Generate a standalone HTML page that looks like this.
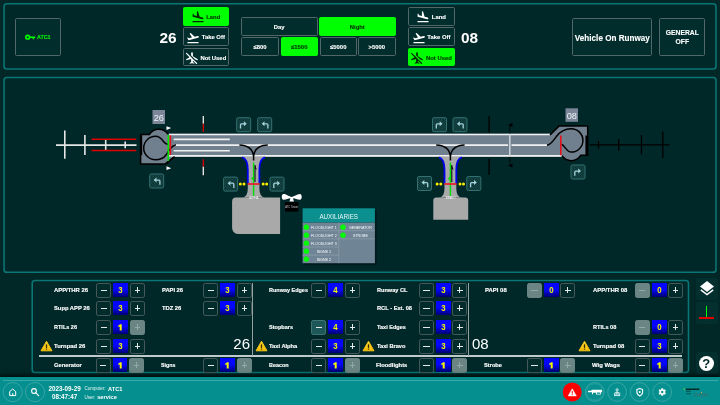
<!DOCTYPE html><html><head><meta charset='utf-8'><title>ATC</title><style>
*{box-sizing:border-box;margin:0;padding:0}
html,body{width:720px;height:405px;overflow:hidden;background:#012727;font-family:"Liberation Sans",sans-serif;color:#fff}
.abs{position:absolute}
.panel{position:absolute;border:1.7px solid #0a7676;border-radius:3.5px;background:#012829}
.btn{position:absolute;border:1px solid #526868;border-radius:1.6px;-webkit-text-stroke:0.12px currentColor;background:#022d2d;color:#fff;font-weight:bold;display:flex;align-items:center;justify-content:center;text-align:center}
.btn.on{background:#00ff00;border-color:#00ff00;color:#003000}
.lbl{position:absolute;font-weight:bold;font-size:6.1px;line-height:8px;white-space:nowrap;color:#fff;-webkit-text-stroke:0.15px #fff}
.sq{position:absolute;width:15.2px;height:15.2px;border:1px solid #45595a;border-radius:2.2px;background:#022b2b}
.sq.dis{background:#6a8583;border-color:#6a8583}
.sq.hov{background:#1d5757;border-color:#3f7777}
.val{position:absolute;width:14.8px;height:13.9px;background:linear-gradient(#0606ff 45%,#000074);color:#f6f600;font-weight:bold;font-size:8.9px;line-height:15px;text-align:center}
.val span{display:inline-block;transform:scaleX(.88)}
.sq i{position:absolute;background:#e4eaea}
.sq.dis i{background:#93a9a7}
.sq .h{left:3.4px;width:6.4px;top:6.05px;height:1.1px}
.sq .v{top:3.9px;height:5.4px;left:6.05px;width:1.1px}
.big{position:absolute;font-size:15px;line-height:16px;color:#fff}
</style></head><body><div id='root' style='position:absolute;left:0;top:0;width:720px;height:405px;will-change:transform'>
<svg class="abs" style="left:0;top:0" width="720" height="405"><g fill="#012829" stroke="#0a7676" stroke-width="1.6"><rect x="4.03" y="3.75" width="711.97" height="65.25" rx="2.8"/><rect x="4.03" y="77.5" width="711.97" height="194.7" rx="2.8"/><rect x="32.2" y="280.5" width="656.3" height="92" rx="2.8"/></g></svg>
<div class="btn" style="left:15px;top:18px;width:46px;height:38px;color:#00ff00;font-size:5.9px;padding-right:0.5px"><svg width="10.5" height="6.3" viewBox="0 0 20 12" style="margin-right:0.6px;flex:none;position:relative;top:0.1px"><circle cx="5.2" cy="6" r="3.5" fill="none" stroke="#00ff00" stroke-width="3.2"/><path d="M8 4.6h11.5v2.900h-1.600l-2 3.600-2-3.600H8z" fill="#00ff00"/></svg><span style="display:inline-block;transform:scaleX(.9);transform-origin:0 50%;margin-right:-1.5px">ATC1</span></div>
<div class="btn on" style="left:183px;top:7px;width:46px;height:18.6px;font-size:5.9px;white-space:nowrap;padding-right:2.4px"><svg width="14" height="14" viewBox="0 0 24 24" fill="#002800" style="margin:0 1.7px 0 1.3px;flex:none;position:relative;top:1px"><path d="M2.5 19h19v2h-19v-2zm7.18-5.73l4.35 1.16 5.31 1.42c.8.21 1.62-.26 1.84-1.06.21-.8-.26-1.62-1.06-1.84l-5.31-1.42-2.76-9.02L10.12 2v8.28L5.15 8.95l-.93-2.32-1.45-.39v5.17l1.6.43 5.31 1.43z"/></svg><span style="position:relative;top:0.8px">Land</span></div>
<div class="btn" style="left:183px;top:27.4px;width:46px;height:18.6px;font-size:5.9px;white-space:nowrap;padding-right:2.4px"><svg width="14" height="14" viewBox="0 0 24 24" fill="#fff" style="margin:0 1.7px 0 1.3px;flex:none;position:relative;top:1px"><path d="M2.5 19h19v2h-19v-2zm19.57-9.36c-.21-.8-1.04-1.28-1.84-1.06L14.92 10l-6.9-6.43-1.93.51 4.14 7.17-4.97 1.33-1.97-1.54-1.45.39 1.82 3.16.77 1.33 1.6-.43 5.31-1.42 4.35-1.16L21 11.49c.81-.23 1.28-1.05 1.07-1.85z"/></svg><span style="position:relative;top:0.8px">Take Off</span></div>
<div class="btn" style="left:183px;top:47.8px;width:46px;height:18.6px;font-size:5.9px;white-space:nowrap;padding-right:2.4px"><svg width="14" height="14" viewBox="0 0 24 24" fill="#fff" style="margin:0 1.7px 0 1.3px;flex:none;position:relative;top:1px"><path d="M10.5 7.67V3.5c0-.83.67-1.500 1.500-1.500s1.500.67 1.500 1.500V9l8.500 5v2l-4.490-1.320-7.010-7.010zm9.280 14.940l1.410-1.410-7.690-7.700-3.940-3.940-6.750-6.750-1.420 1.410 6.380 6.380L2 14v2l8.500-2.500V19L8 20.500V22l4-1 4 1v-1.500L13.500 19v-2.670l6.280 6.280z"/></svg><span style="position:relative;top:0.8px">Not Used</span></div>
<div class="btn" style="left:408.4px;top:7px;width:46.4px;height:18.6px;font-size:5.9px;white-space:nowrap;padding-right:2.4px"><svg width="14" height="14" viewBox="0 0 24 24" fill="#fff" style="margin:0 1.7px 0 1.3px;flex:none;position:relative;top:1px"><path d="M2.5 19h19v2h-19v-2zm7.18-5.73l4.35 1.16 5.31 1.42c.8.21 1.62-.26 1.84-1.06.21-.8-.26-1.62-1.06-1.84l-5.31-1.42-2.76-9.02L10.12 2v8.28L5.15 8.95l-.93-2.32-1.45-.39v5.17l1.6.43 5.31 1.43z"/></svg><span style="position:relative;top:0.8px">Land</span></div>
<div class="btn" style="left:408.4px;top:27.4px;width:46.4px;height:18.6px;font-size:5.9px;white-space:nowrap;padding-right:2.4px"><svg width="14" height="14" viewBox="0 0 24 24" fill="#fff" style="margin:0 1.7px 0 1.3px;flex:none;position:relative;top:1px"><path d="M2.5 19h19v2h-19v-2zm19.57-9.36c-.21-.8-1.04-1.28-1.84-1.06L14.92 10l-6.9-6.43-1.93.51 4.14 7.17-4.97 1.33-1.97-1.54-1.45.39 1.82 3.16.77 1.33 1.6-.43 5.31-1.42 4.35-1.16L21 11.49c.81-.23 1.28-1.05 1.07-1.85z"/></svg><span style="position:relative;top:0.8px">Take Off</span></div>
<div class="btn on" style="left:408.4px;top:47.8px;width:46.4px;height:18.6px;font-size:5.9px;white-space:nowrap;padding-right:2.4px"><svg width="14" height="14" viewBox="0 0 24 24" fill="#002800" style="margin:0 1.7px 0 1.3px;flex:none;position:relative;top:1px"><path d="M10.5 7.67V3.5c0-.83.67-1.500 1.500-1.500s1.500.67 1.500 1.500V9l8.500 5v2l-4.490-1.320-7.010-7.010zm9.280 14.940l1.410-1.410-7.690-7.700-3.940-3.940-6.750-6.750-1.420 1.410 6.380 6.380L2 14v2l8.500-2.500V19L8 20.500V22l4-1 4 1v-1.500L13.500 19v-2.670l6.280 6.280z"/></svg><span style="position:relative;top:0.8px">Not Used</span></div>
<div class="abs" style="left:159.4px;top:28.7px;font-size:15.4px;line-height:17px;font-weight:bold">26</div>
<div class="abs" style="left:460.9px;top:28.7px;font-size:15.4px;line-height:17px;font-weight:bold">08</div>
<div class="btn" style="left:241px;top:17px;width:76.5px;height:18.5px;font-size:5.9px;padding-top:1.4px">Day</div>
<div class="btn on" style="left:319px;top:17px;width:76.6px;height:18.5px;font-size:5.9px;padding-top:1.4px">Night</div>
<div class="btn" style="left:241px;top:37.1px;width:38px;height:19.2px;font-size:5.9px;padding-top:1.4px">≤800</div>
<div class="btn on" style="left:280.5px;top:37.1px;width:37.5px;height:19.2px;font-size:5.9px;padding-top:1.4px">≤1500</div>
<div class="btn" style="left:319.5px;top:37.1px;width:37.5px;height:19.2px;font-size:5.9px;padding-top:1.4px">≤5000</div>
<div class="btn" style="left:358px;top:37.1px;width:37.5px;height:19.2px;font-size:5.9px;padding-top:1.4px">&gt;5000</div>
<div class="btn" style="left:571.8px;top:18px;width:80px;height:38px;font-size:9.2px;white-space:nowrap;padding:1px 0 0 1.2px"><span style="display:inline-block;transform:scaleX(.885)">Vehicle On Runway</span></div>
<div class="btn" style="left:659px;top:18px;width:45.8px;height:38px;font-size:7.1px;line-height:9.5px;padding-top:2.4px"><span style="display:inline-block;transform:scaleX(.95)">GENERAL<br>OFF</span></div>
<svg class="abs" style="left:0;top:0" width="720" height="405" viewBox="0 0 720 405">
<defs>
<pattern id="dots" width="2.600" height="2.600" patternUnits="userSpaceOnUse"><rect width="2.600" height="2.600" fill="#022626"/><rect width="1.300" height="1.300" fill="#225555"/><rect x="1.300" y="1.300" width="1.300" height="1.300" fill="#225555"/></pattern>
<g id="tr"><rect x="0.500" y="0.500" width="14" height="14" rx="1.500" fill="url(#dots)" stroke="#337070" stroke-width="1"/><path d="M4.300 11.300V7.600Q4.300 6.600 5.300 6.600H8" fill="none" stroke="#a4d4dc" stroke-width="1.300"/><path d="M7.700 4.100L10.500 6.600 7.700 9.100z" fill="#a4d4dc"/></g>
<g id="tl"><use href="#tr" transform="translate(15,0) scale(-1,1)"/></g>
</defs>
<g stroke="#e6e6e6" stroke-width="1.600" fill="none">
<path d="M56 145.100H136.500"/><path d="M64.800 130.500V158.700"/><path d="M84.900 135V155"/><path d="M105.700 140V150.200"/><path d="M125.200 141.500V148.300"/></g>
<g stroke="#e00000" stroke-width="1.500"><path d="M91.500 139.200H136.300"/><path d="M91.500 150.600H136.300"/></g>
<path d="M140.600 134.400H149.400A11 11 0 0 1 168.100 134.400V157H174.800L165.500 163.900H140.600Z" fill="#70808f"/>
<path d="M174.800 156.500L165.500 163.900H140.600V134.400H149.400A11 11 0 0 1 168.100 134.400" fill="none" stroke="#000" stroke-width="1.500" stroke-linejoin="miter"/>
<path d="M141.100 134.400V155.200" stroke="#000" stroke-width="2.200"/>
<rect x="168.500" y="133.700" width="382" height="23" fill="#70808f"/>
<path d="M550 135L559 126.100H587.700V155.200H580.800A11 11 0 0 1 562.100 155.700L561 156.700H550Z" fill="#70808f"/>
<g stroke="#f0f0f0" stroke-width="1.600">
<path d="M169 134.500H550"/><path d="M169 155.900H561.600"/>
<path d="M173.700 145.100H508"/><path d="M511.500 145.100H547"/>
<path d="M173.700 139.400H229.800"/><path d="M173.700 150.700H229.800"/></g>
<path d="M550 135L559 126.100H587.700V155.200H580.800A11 11 0 0 1 562.100 155.700" fill="none" stroke="#000" stroke-width="1.500"/>
<path d="M586.600 135.500V155.200" stroke="#000" stroke-width="2.400"/>
<path d="M547 145.300C551 144.500 553 141 556 137C559.500 132 564 128.700 571.200 128.700A11.700 11.700 0 0 1 571.200 152.100C566.500 152.100 565 145.500 561.500 144.300" fill="none" stroke="#000" stroke-width="1.500"/>
<path d="M560.800 135.500V155.200" stroke="#e8101a" stroke-width="1.600"/>
<path d="M165.500 163.900L174.600 156.700" stroke="#000" stroke-width="1.500"/>
<path d="M175.900 144.700C171 145.500 169.500 150 166 155C163.500 158.500 159.500 159.800 155.500 159.800A11.800 11.800 0 0 1 155.500 136.200C159 136.200 161.500 138.500 163.500 141.500C165 143.600 166.500 144.300 168 144.400" fill="none" stroke="#000" stroke-width="1.500"/>
<path d="M168.300 134.900V160.800" stroke="#00e800" stroke-width="1.600"/>
<path d="M170.400 135.400V155.100" stroke="#e8101a" stroke-width="1.600"/>
<rect x="152.500" y="110" width="12.500" height="14" fill="#7b8799"/><text x="158.750" y="120.500" font-size="9.200" fill="#eef2f6" text-anchor="middle" font-family="Liberation Sans">26</text>
<rect x="565.500" y="108.300" width="12.500" height="13.500" fill="#7b8799"/><text x="571.750" y="118.700" font-size="9.200" fill="#eef2f6" text-anchor="middle" font-family="Liberation Sans">08</text>
<path d="M166.500 126.200L171.200 128.100 166.500 130zM166.500 166.300L171.200 168.200 166.500 170.100z" fill="#fff"/>
<path d="M203.300 116V123.700M203.300 166.600V175.200" stroke="#f0f0f0" stroke-width="1.300"/>
<path d="M203.300 123.700V131.800M203.300 159.200V166.600" stroke="#e00000" stroke-width="1.300"/>
<path d="M489.100 116V132.500M489.100 159V175" stroke="#000" stroke-width="1.300"/>
<path d="M509.800 126.500V133M509.800 157V163.500" stroke="#000" stroke-width="1" stroke-dasharray="2.200 0.500"/>
<path d="M509.800 134V157" stroke="#cfd4db" stroke-width="1.500"/>
<path d="M508 125L512.500 122.800V127.100zM508 165.600L512.500 163.500V167.600z" fill="#000"/>
<g stroke="#000" stroke-width="1.300"><path d="M589.600 144.800H669.600"/><path d="M598.500 141V148.700"/><path d="M618.700 139V150.700"/><path d="M641.500 135V154.600"/><path d="M662.800 131.500V158.100"/></g>
<path d="M241.79999999999998 156.700Q247.79999999999998 158 247.79999999999998 170V188.500Q247.79999999999998 197.600 241.79999999999998 197.600H265.4Q259.4 197.600 259.4 188.500V170Q259.4 158 265.4 156.700Z" fill="#a9a9a9"/>
<path d="M236 197.600H280.100V234.100H239Q232.100 234.100 232.100 227.500V201.500Q232.100 197.600 236 197.600Z" fill="#a9a9a9"/>
<path d="M242.29999999999998 157.300Q247.79999999999998 159 247.79999999999998 170V183.300" fill="none" stroke="#0000ee" stroke-width="1.800"/>
<path d="M264.9 157.300Q259.4 159 259.4 170V183.300" fill="none" stroke="#0000ee" stroke-width="1.800"/>
<path d="M239.4 145Q252.6 145.500 253.6 156.500Q254.6 145.500 267.8 145M253.6 155V160.500" fill="none" stroke="#000" stroke-width="1.500"/>
<path d="M253.6 162.600V196" stroke="#00e000" stroke-width="1.400"/>
<path d="M253.29999999999998 176.500L251.0 178.500L253.29999999999998 180.500z" fill="#00e000"/>
<path d="M255.0 165V182" stroke="#000" stroke-width="1"/>
<path d="M255.0 165.500L256.9 169.800L255.0 168.500z" fill="#000"/>
<path d="M247.79999999999998 184H259.4" stroke="#e8202a" stroke-width="1.800"/>
<circle cx="240.29999999999998" cy="184" r="1.500" fill="#ffee00"/>
<circle cx="244.0" cy="184" r="1.500" fill="#ffee00"/>
<circle cx="263.2" cy="184" r="1.500" fill="#ffee00"/>
<circle cx="266.7" cy="184" r="1.500" fill="#ffee00"/>
<text x="253.800" y="199.400" font-size="2.800" fill="#fff" text-anchor="middle" font-family="Liberation Sans">ALPHA</text>
<path d="M438.5 156.700Q444.5 158 444.5 170V188.500Q444.5 197.600 438.5 197.600H462.29999999999995Q456.29999999999995 197.600 456.29999999999995 188.500V170Q456.29999999999995 158 462.29999999999995 156.700Z" fill="#a9a9a9"/>
<path d="M436.300 197.400H465.200Q468.200 197.400 468.200 200.400V219.700H433.300V200.400Q433.300 197.400 436.300 197.400Z" fill="#a9a9a9"/>
<path d="M439.0 157.300Q444.5 159 444.5 170V183.300" fill="none" stroke="#0000ee" stroke-width="1.800"/>
<path d="M461.79999999999995 157.300Q456.29999999999995 159 456.29999999999995 170V183.300" fill="none" stroke="#0000ee" stroke-width="1.800"/>
<path d="M436.2 145Q449.4 145.500 450.4 156.500Q451.4 145.500 464.59999999999997 145M450.4 155V160.500" fill="none" stroke="#000" stroke-width="1.500"/>
<path d="M450.4 162.600V196" stroke="#00e000" stroke-width="1.400"/>
<path d="M450.09999999999997 176.500L447.79999999999995 178.500L450.09999999999997 180.500z" fill="#00e000"/>
<path d="M451.79999999999995 165V182" stroke="#000" stroke-width="1"/>
<path d="M451.79999999999995 165.500L453.7 169.800L451.79999999999995 168.500z" fill="#000"/>
<path d="M444.5 184H456.29999999999995" stroke="#e8202a" stroke-width="1.800"/>
<circle cx="437.09999999999997" cy="184" r="1.500" fill="#ffee00"/>
<circle cx="440.79999999999995" cy="184" r="1.500" fill="#ffee00"/>
<circle cx="460.0" cy="184" r="1.500" fill="#ffee00"/>
<circle cx="463.5" cy="184" r="1.500" fill="#ffee00"/>
<text x="450.600" y="199.400" font-size="2.800" fill="#fff" text-anchor="middle" font-family="Liberation Sans">BRAVO</text>
<use href="#tl" x="149.2" y="173.5"/>
<use href="#tr" x="236.2" y="117.2"/>
<use href="#tl" x="257.2" y="117.2"/>
<use href="#tl" x="223.1" y="176.6"/>
<use href="#tr" x="269.5" y="176.6"/>
<use href="#tr" x="432" y="117.2"/>
<use href="#tl" x="452.5" y="117.2"/>
<use href="#tl" x="417" y="176"/>
<use href="#tr" x="466.3" y="176"/>
<use href="#tr" x="570.5" y="164.5"/>
<path d="M283.500 194.100C287 194.100 289 196.900 291.700 196.900C294.400 196.900 296.500 194.100 300 194.100C302.300 194.100 302.300 199.800 300 199.800C297 199.800 295 198.400 293 198.300L293.900 201.600H289.500L290.400 198.300C288.400 198.400 286.500 199.800 283.500 199.800C281.200 199.800 281.200 194.100 283.500 194.100Z" fill="#fff"/>
<rect x="285" y="202" width="13.300" height="9.600" fill="#000"/>
<text x="291.650" y="207.900" font-size="2.700" fill="#c4c8d0" text-anchor="middle" font-family="Liberation Sans">ATC Tower</text>
<rect x="304.200" y="210.200" width="72.600" height="55" fill="#000" opacity="0.300"/>
<rect x="302.600" y="208.300" width="72.300" height="14.300" fill="#0b8f8f"/>
<rect x="302.600" y="222.600" width="72.300" height="40.600" fill="#6f8495"/>
<text x="338.700" y="218.700" font-size="7.300" fill="#eaf6f6" text-anchor="middle" font-family="Liberation Sans" textLength="38.600" lengthAdjust="spacingAndGlyphs">AUXILIARIES</text>
<g stroke="#93a4b2" stroke-width="0.600">
<path d="M302.600 230.72H374.9"/>
<path d="M302.600 238.84H374.9"/>
<path d="M302.600 246.96H338.8"/>
<path d="M302.600 255.08H338.8"/>
<path d="M338.800 222.600V263.200"/></g>
<circle cx="306.300" cy="227.20" r="2.700" fill="#00ff00"/>
<text x="323.900" y="228.65" font-size="4.100" fill="#fff" text-anchor="middle" font-family="Liberation Sans" textLength="25.6" lengthAdjust="spacingAndGlyphs">FLOODLIGHT 1</text>
<circle cx="306.300" cy="235.18" r="2.700" fill="#00ff00"/>
<text x="323.900" y="236.63" font-size="4.100" fill="#fff" text-anchor="middle" font-family="Liberation Sans" textLength="25.6" lengthAdjust="spacingAndGlyphs">FLOODLIGHT 2</text>
<circle cx="306.300" cy="243.16" r="2.700" fill="#00ff00"/>
<text x="323.900" y="244.61" font-size="4.100" fill="#fff" text-anchor="middle" font-family="Liberation Sans" textLength="25.6" lengthAdjust="spacingAndGlyphs">FLOODLIGHT 3</text>
<circle cx="306.300" cy="251.14" r="2.700" fill="#00ff00"/>
<text x="323.900" y="252.59" font-size="4.100" fill="#fff" text-anchor="middle" font-family="Liberation Sans" textLength="14.5" lengthAdjust="spacingAndGlyphs">SIGNS 1</text>
<circle cx="306.300" cy="259.12" r="2.700" fill="#00ff00"/>
<text x="323.900" y="260.57" font-size="4.100" fill="#fff" text-anchor="middle" font-family="Liberation Sans" textLength="14.5" lengthAdjust="spacingAndGlyphs">SIGNS 2</text>
<circle cx="343" cy="227.20" r="2.700" fill="#00ff00"/>
<text x="360.400" y="228.65" font-size="4.100" fill="#fff" text-anchor="middle" font-family="Liberation Sans" textLength="23" lengthAdjust="spacingAndGlyphs">GENERATOR</text>
<circle cx="343" cy="235.18" r="2.700" fill="#00ff00"/>
<text x="360.400" y="236.63" font-size="4.100" fill="#fff" text-anchor="middle" font-family="Liberation Sans" textLength="14.8" lengthAdjust="spacingAndGlyphs">STROBE</text>
</svg>
<div class="lbl" style="left:54.3px;top:286.3px;transform:scaleX(0.964);transform-origin:0 0">APP/THR 26</div>
<div class="sq " style="left:96.3px;top:282.6px"><i class="h"></i></div>
<div class="val" style="left:113.4px;top:283.4px"><span>3</span></div>
<div class="sq " style="left:129.7px;top:282.6px"><i class="h" style="left:4px;width:5.4px"></i><i class="v"></i></div>
<div class="lbl" style="left:54.3px;top:304.3px;transform:scaleX(0.949);transform-origin:0 0">Supp APP 26</div>
<div class="sq " style="left:96.3px;top:300.6px"><i class="h"></i></div>
<div class="val" style="left:113.4px;top:301.4px"><span>3</span></div>
<div class="sq " style="left:129.7px;top:300.6px"><i class="h" style="left:4px;width:5.4px"></i><i class="v"></i></div>
<div class="lbl" style="left:54.3px;top:323.3px;transform:scaleX(0.905);transform-origin:0 0">RTILs 26</div>
<div class="sq " style="left:96.3px;top:319.6px"><i class="h"></i></div>
<div class="val" style="left:113.4px;top:320.4px"><svg width="14.8" height="13.9" style="position:absolute;left:0;top:0"><path d="M8.700 4.300V10.500H6.700V6.600L5.300 7.100V5.500L7.300 4.300z" fill="#f6f600"/></svg></div>
<div class="sq dis" style="left:129.7px;top:319.6px"><i class="h" style="left:4px;width:5.4px"></i><i class="v"></i></div>
<div class="lbl" style="left:54.3px;top:342.2px;transform:scaleX(0.965);transform-origin:0 0">Turnpad 26</div>
<div class="sq " style="left:96.3px;top:338.5px"><i class="h"></i></div>
<div class="val" style="left:113.4px;top:339.3px"><span>3</span></div>
<div class="sq " style="left:129.7px;top:338.5px"><i class="h" style="left:4px;width:5.4px"></i><i class="v"></i></div>
<svg class="abs" style="left:39.5px;top:339.7px" width="13" height="12" viewBox="0 0 13 12"><defs><linearGradient id="wg" x1="0" y1="0" x2="0" y2="1"><stop offset="0" stop-color="#ffd940"/><stop offset="1" stop-color="#f2bc00"/></linearGradient></defs><path d="M6.500 1.200L12 10.800H1z" fill="url(#wg)" stroke="#f4c410" stroke-width="1" stroke-linejoin="round"/><rect x="5.850" y="4.300" width="1.300" height="3.600" rx="0.400" fill="#3a2c00"/><rect x="5.850" y="8.500" width="1.300" height="1.300" fill="#5a4800"/></svg>
<div class="lbl" style="left:53.599999999999994px;top:361.3px;transform:scaleX(0.950);transform-origin:0 0">Generator</div>
<div class="sq " style="left:95.5px;top:357.6px"><i class="h"></i></div>
<div class="val" style="left:112.6px;top:358.4px"><svg width="14.8" height="13.9" style="position:absolute;left:0;top:0"><path d="M8.700 4.300V10.500H6.700V6.600L5.300 7.100V5.500L7.300 4.300z" fill="#f6f600"/></svg></div>
<div class="sq dis" style="left:128.9px;top:357.6px"><i class="h" style="left:4px;width:5.4px"></i><i class="v"></i></div>
<div class="lbl" style="left:161.7px;top:286.3px;transform:scaleX(0.943);transform-origin:0 0">PAPI 26</div>
<div class="sq " style="left:203.3px;top:282.6px"><i class="h"></i></div>
<div class="val" style="left:220.4px;top:283.4px"><span>3</span></div>
<div class="sq " style="left:236.7px;top:282.6px"><i class="h" style="left:4px;width:5.4px"></i><i class="v"></i></div>
<div class="lbl" style="left:161.7px;top:304.3px;transform:scaleX(0.949);transform-origin:0 0">TDZ 26</div>
<div class="sq " style="left:203.3px;top:300.6px"><i class="h"></i></div>
<div class="val" style="left:220.4px;top:301.4px"><span>3</span></div>
<div class="sq " style="left:236.7px;top:300.6px"><i class="h" style="left:4px;width:5.4px"></i><i class="v"></i></div>
<div class="lbl" style="left:161.39999999999998px;top:361.3px;transform:scaleX(0.867);transform-origin:0 0">Signs</div>
<div class="sq " style="left:203.3px;top:357.6px"><i class="h"></i></div>
<div class="val" style="left:220.4px;top:358.4px"><svg width="14.8" height="13.9" style="position:absolute;left:0;top:0"><path d="M8.700 4.300V10.500H6.700V6.600L5.300 7.100V5.500L7.300 4.300z" fill="#f6f600"/></svg></div>
<div class="sq dis" style="left:236.7px;top:357.6px"><i class="h" style="left:4px;width:5.4px"></i><i class="v"></i></div>
<div class="lbl" style="left:269.3px;top:286.3px;transform:scaleX(0.899);transform-origin:0 0">Runway Edges</div>
<div class="sq " style="left:311.3px;top:282.6px"><i class="h"></i></div>
<div class="val" style="left:328.4px;top:283.4px"><span>4</span></div>
<div class="sq " style="left:344.7px;top:282.6px"><i class="h" style="left:4px;width:5.4px"></i><i class="v"></i></div>
<div class="lbl" style="left:269.3px;top:323.3px;transform:scaleX(0.908);transform-origin:0 0">Stopbars</div>
<div class="sq hov" style="left:311.3px;top:319.6px"><i class="h"></i></div>
<div class="val" style="left:328.4px;top:320.4px"><span>4</span></div>
<div class="sq " style="left:344.7px;top:319.6px"><i class="h" style="left:4px;width:5.4px"></i><i class="v"></i></div>
<div class="lbl" style="left:269.3px;top:342.2px;transform:scaleX(0.938);transform-origin:0 0">Taxi Alpha</div>
<div class="sq " style="left:311.3px;top:338.5px"><i class="h"></i></div>
<div class="val" style="left:328.4px;top:339.3px"><span>3</span></div>
<div class="sq " style="left:344.7px;top:338.5px"><i class="h" style="left:4px;width:5.4px"></i><i class="v"></i></div>
<svg class="abs" style="left:254.5px;top:339.7px" width="13" height="12" viewBox="0 0 13 12"><defs><linearGradient id="wg" x1="0" y1="0" x2="0" y2="1"><stop offset="0" stop-color="#ffd940"/><stop offset="1" stop-color="#f2bc00"/></linearGradient></defs><path d="M6.500 1.200L12 10.800H1z" fill="url(#wg)" stroke="#f4c410" stroke-width="1" stroke-linejoin="round"/><rect x="5.850" y="4.300" width="1.300" height="3.600" rx="0.400" fill="#3a2c00"/><rect x="5.850" y="8.500" width="1.300" height="1.300" fill="#5a4800"/></svg>
<div class="lbl" style="left:269.0px;top:361.3px;transform:scaleX(0.894);transform-origin:0 0">Beacon</div>
<div class="sq " style="left:311.3px;top:357.6px"><i class="h"></i></div>
<div class="val" style="left:328.4px;top:358.4px"><svg width="14.8" height="13.9" style="position:absolute;left:0;top:0"><path d="M8.700 4.300V10.500H6.700V6.600L5.300 7.100V5.500L7.300 4.300z" fill="#f6f600"/></svg></div>
<div class="sq dis" style="left:344.7px;top:357.6px"><i class="h" style="left:4px;width:5.4px"></i><i class="v"></i></div>
<div class="lbl" style="left:376.7px;top:286.3px;transform:scaleX(0.915);transform-origin:0 0">Runway CL</div>
<div class="sq " style="left:418.8px;top:282.6px"><i class="h"></i></div>
<div class="val" style="left:435.9px;top:283.4px"><span>3</span></div>
<div class="sq " style="left:452.2px;top:282.6px"><i class="h" style="left:4px;width:5.4px"></i><i class="v"></i></div>
<div class="lbl" style="left:376.7px;top:304.3px;transform:scaleX(0.933);transform-origin:0 0">RCL - Ext. 08</div>
<div class="sq " style="left:418.8px;top:300.6px"><i class="h"></i></div>
<div class="val" style="left:435.9px;top:301.4px"><span>3</span></div>
<div class="sq " style="left:452.2px;top:300.6px"><i class="h" style="left:4px;width:5.4px"></i><i class="v"></i></div>
<div class="lbl" style="left:376.7px;top:323.3px;transform:scaleX(0.913);transform-origin:0 0">Taxi Edges</div>
<div class="sq " style="left:418.8px;top:319.6px"><i class="h"></i></div>
<div class="val" style="left:435.9px;top:320.4px"><span>3</span></div>
<div class="sq " style="left:452.2px;top:319.6px"><i class="h" style="left:4px;width:5.4px"></i><i class="v"></i></div>
<div class="lbl" style="left:376.7px;top:342.2px;transform:scaleX(0.927);transform-origin:0 0">Taxi Bravo</div>
<div class="sq " style="left:418.8px;top:338.5px"><i class="h"></i></div>
<div class="val" style="left:435.9px;top:339.3px"><span>3</span></div>
<div class="sq " style="left:452.2px;top:338.5px"><i class="h" style="left:4px;width:5.4px"></i><i class="v"></i></div>
<svg class="abs" style="left:361.9px;top:339.7px" width="13" height="12" viewBox="0 0 13 12"><defs><linearGradient id="wg" x1="0" y1="0" x2="0" y2="1"><stop offset="0" stop-color="#ffd940"/><stop offset="1" stop-color="#f2bc00"/></linearGradient></defs><path d="M6.500 1.200L12 10.800H1z" fill="url(#wg)" stroke="#f4c410" stroke-width="1" stroke-linejoin="round"/><rect x="5.850" y="4.300" width="1.300" height="3.600" rx="0.400" fill="#3a2c00"/><rect x="5.850" y="8.500" width="1.300" height="1.300" fill="#5a4800"/></svg>
<div class="lbl" style="left:376.4px;top:361.3px;transform:scaleX(0.955);transform-origin:0 0">Floodlights</div>
<div class="sq " style="left:418.8px;top:357.6px"><i class="h"></i></div>
<div class="val" style="left:435.9px;top:358.4px"><svg width="14.8" height="13.9" style="position:absolute;left:0;top:0"><path d="M8.700 4.300V10.500H6.700V6.600L5.300 7.100V5.500L7.300 4.300z" fill="#f6f600"/></svg></div>
<div class="sq dis" style="left:452.2px;top:357.6px"><i class="h" style="left:4px;width:5.4px"></i><i class="v"></i></div>
<div class="lbl" style="left:484.6px;top:286.3px;transform:scaleX(0.975);transform-origin:0 0">PAPI 08</div>
<div class="sq dis" style="left:526.8px;top:282.6px"><i class="h"></i></div>
<div class="val" style="left:543.9px;top:283.4px"><span>0</span></div>
<div class="sq " style="left:560.2px;top:282.6px"><i class="h" style="left:4px;width:5.4px"></i><i class="v"></i></div>
<div class="lbl" style="left:484.3px;top:361.3px;transform:scaleX(0.932);transform-origin:0 0">Strobe</div>
<div class="sq " style="left:526.8px;top:357.6px"><i class="h"></i></div>
<div class="val" style="left:543.9px;top:358.4px"><svg width="14.8" height="13.9" style="position:absolute;left:0;top:0"><path d="M8.700 4.300V10.500H6.700V6.600L5.300 7.100V5.500L7.300 4.300z" fill="#f6f600"/></svg></div>
<div class="sq dis" style="left:560.2px;top:357.6px"><i class="h" style="left:4px;width:5.4px"></i><i class="v"></i></div>
<div class="lbl" style="left:592.5px;top:286.3px;transform:scaleX(0.973);transform-origin:0 0">APP/THR 08</div>
<div class="sq dis" style="left:634.7px;top:282.6px"><i class="h"></i></div>
<div class="val" style="left:651.8px;top:283.4px"><span>0</span></div>
<div class="sq " style="left:668.1px;top:282.6px"><i class="h" style="left:4px;width:5.4px"></i><i class="v"></i></div>
<div class="lbl" style="left:592.5px;top:323.3px;transform:scaleX(0.916);transform-origin:0 0">RTILs 08</div>
<div class="sq dis" style="left:634.7px;top:319.6px"><i class="h"></i></div>
<div class="val" style="left:651.8px;top:320.4px"><span>0</span></div>
<div class="sq " style="left:668.1px;top:319.6px"><i class="h" style="left:4px;width:5.4px"></i><i class="v"></i></div>
<div class="lbl" style="left:592.5px;top:342.2px;transform:scaleX(0.965);transform-origin:0 0">Turnpad 08</div>
<div class="sq " style="left:634.7px;top:338.5px"><i class="h"></i></div>
<div class="val" style="left:651.8px;top:339.3px"><span>3</span></div>
<div class="sq " style="left:668.1px;top:338.5px"><i class="h" style="left:4px;width:5.4px"></i><i class="v"></i></div>
<svg class="abs" style="left:577.7px;top:339.7px" width="13" height="12" viewBox="0 0 13 12"><defs><linearGradient id="wg" x1="0" y1="0" x2="0" y2="1"><stop offset="0" stop-color="#ffd940"/><stop offset="1" stop-color="#f2bc00"/></linearGradient></defs><path d="M6.500 1.200L12 10.800H1z" fill="url(#wg)" stroke="#f4c410" stroke-width="1" stroke-linejoin="round"/><rect x="5.850" y="4.300" width="1.300" height="3.600" rx="0.400" fill="#3a2c00"/><rect x="5.850" y="8.500" width="1.300" height="1.300" fill="#5a4800"/></svg>
<div class="lbl" style="left:592.2px;top:361.3px;transform:scaleX(0.970);transform-origin:0 0">Wig Wags</div>
<div class="sq " style="left:634.7px;top:357.6px"><i class="h"></i></div>
<div class="val" style="left:651.8px;top:358.4px"><svg width="14.8" height="13.9" style="position:absolute;left:0;top:0"><path d="M8.700 4.300V10.500H6.700V6.600L5.300 7.100V5.500L7.300 4.300z" fill="#f6f600"/></svg></div>
<div class="sq dis" style="left:668.1px;top:357.6px"><i class="h" style="left:4px;width:5.4px"></i><i class="v"></i></div>
<div class="abs" style="left:38.7px;top:355.300px;width:643.6px;height:1.500px;background:#bfcaca"></div>
<div class="abs" style="left:251.800px;top:283px;width:1.200px;height:73px;background:#93a3a3"></div>
<div class="abs" style="left:467.800px;top:283px;width:1.200px;height:73px;background:#93a3a3"></div>
<div class="big" style="left:233.3px;top:336px">26</div>
<div class="big" style="left:472px;top:336px">08</div>
<div class="abs" style="left:695.500px;top:277.500px;width:22px;height:22px;background:#042f2f;border-radius:2px"></div>
<svg class="abs" style="left:698.500px;top:279.500px" width="16" height="17" viewBox="0 0 16 17"><path d="M8 1L15 6.500 8 12 1 6.500z" fill="#fff"/><path d="M1.800 9.800L8 14.600 14.200 9.800" fill="none" stroke="#fff" stroke-width="1.500"/></svg>
<div class="abs" style="left:695.500px;top:301.500px;width:22px;height:22px;background:#042f2f;border-radius:2px"></div>
<div class="abs" style="left:705.500px;top:306px;width:1.800px;height:11.500px;background:#00ff00"></div>
<div class="abs" style="left:698.500px;top:317.200px;width:15.500px;height:1.500px;background:#e00000"></div>
<div class="abs" style="left:695.500px;top:352px;width:22px;height:22px;background:#042f2f;border-radius:2px"></div>
<div class="abs" style="left:698.500px;top:355.500px;width:15.500px;height:15.500px;border-radius:50%;background:#fff;color:#012727;font-weight:bold;font-size:13px;line-height:16px;text-align:center">?</div>
<div class="abs" style="left:0;top:377px;width:720px;height:28px;background:#05908f;box-shadow:0 -1px 4px 1px rgba(0,0,0,.65)"></div>
<div class="abs" style="left:2.500px;top:379.600px;width:715px;height:1px;background:#3aa8a8"></div>
<svg class="abs" style="left:0;top:377px" width="720" height="28" viewBox="0 377 720 28">
<g fill="none" stroke="#4cadad" stroke-width="0.700">
<circle cx="12.700" cy="392.100" r="9.600"/><circle cx="35" cy="392.100" r="9.600"/>
<circle cx="594.750" cy="392" r="9.400"/><circle cx="617.100" cy="392" r="9.400"/><circle cx="639.750" cy="392" r="9.400"/><circle cx="662.250" cy="392" r="9.400"/>
</g>
<!-- home -->
<path d="M9.700 395.600V391.600L12.700 389 15.700 391.600V395.600H9.700Z" fill="none" stroke="#fff" stroke-width="1" stroke-linejoin="round"/>
<path d="M12.700 395.500V393.200" stroke="#fff" stroke-width="1.100"/>
<!-- search -->
<circle cx="34" cy="391" r="2.400" fill="none" stroke="#fff" stroke-width="1.100"/>
<path d="M35.800 392.800L38.600 395.600" stroke="#fff" stroke-width="1.200" stroke-linecap="round"/>
<!-- alarm -->
<circle cx="572.250" cy="392" r="9.500" fill="#ff0000"/>
<path d="M572.250 388.800L576.300 395.900H568.200Z" fill="#fff" stroke="#fff" stroke-width="0.600" stroke-linejoin="round"/>
<rect x="571.750" y="391" width="1" height="2.600" fill="#ff0000"/><rect x="571.750" y="394.200" width="1" height="1" fill="#ff0000"/>
<!-- vehicle -->
<circle cx="594.750" cy="392" r="8" fill="none" stroke="#6fc0c0" stroke-width="0.500" stroke-dasharray="0.700 0.700"/>
<path d="M588 390.800H591.500V389.800H602V392.200H600.800V394.600H596V392.800H593V394.200H592V392.200H588Z" fill="#fff"/>
<rect x="596.800" y="392.500" width="3.200" height="1.300" fill="#05908f"/>
<!-- network -->
<g fill="none" stroke="#fff" stroke-width="0.800"><circle cx="617.100" cy="389.800" r="1.100"/><circle cx="615.400" cy="393.900" r="1.100"/><circle cx="618.800" cy="393.900" r="1.100"/><path d="M614 395.600H620.200M617.100 391V392.400M615.400 392.600H618.800"/></g>
<!-- shield -->
<path d="M639.750 388.400L642.600 389.500V392Q642.600 394.600 639.750 395.900Q636.900 394.600 636.900 392V389.500Z" fill="none" stroke="#fff" stroke-width="1.100" stroke-linejoin="round"/>
<circle cx="639.750" cy="392" r="1" fill="#fff"/>
<!-- gear -->
<g transform="translate(662.250,392)"><g fill="#fff"><rect x="-1" y="-3.700" width="2" height="7.400"/><rect x="-1" y="-3.700" width="2" height="7.400" transform="rotate(60)"/><rect x="-1" y="-3.700" width="2" height="7.400" transform="rotate(120)"/><circle r="2.700"/></g><circle r="1.200" fill="#05908f"/></g>
<!-- logo -->
<path d="M685 388.200L683.500 389.200 685 390.200" fill="none" stroke="#4be04b" stroke-width="0.700"/>
<rect x="685.800" y="388.500" width="13.500" height="1.500" fill="#0a2a2a"/>
<rect x="686" y="390.800" width="5" height="0.900" fill="#0a4a4a"/>
<rect x="686" y="393.300" width="5" height="0.900" fill="#0a4a4a"/>
<rect x="693.800" y="393.300" width="14.500" height="3" fill="#1f7f7f"/>
<circle cx="701.500" cy="392.400" r="0.600" fill="#e0a030"/>
</svg>
<div class="abs" style="left:44.600px;top:384.700px;width:40px;text-align:center;font-weight:bold;font-size:6.300px;line-height:8px">2023-09-29<br>08:47:47</div>
<div class="abs" style="left:84.400px;top:386.400px;font-size:4.500px;line-height:5px;color:#e4f4f4">Computer:</div>
<div class="abs" style="left:108.100px;top:385.600px;font-size:5.700px;line-height:7px;font-weight:bold">ATC1</div>
<div class="abs" style="left:84.400px;top:394.500px;font-size:4.500px;line-height:5px;color:#e4f4f4">User:</div>
<div class="abs" style="left:97.200px;top:393.500px;font-size:5.700px;line-height:7px;font-weight:bold">service</div>

</div></body></html>
